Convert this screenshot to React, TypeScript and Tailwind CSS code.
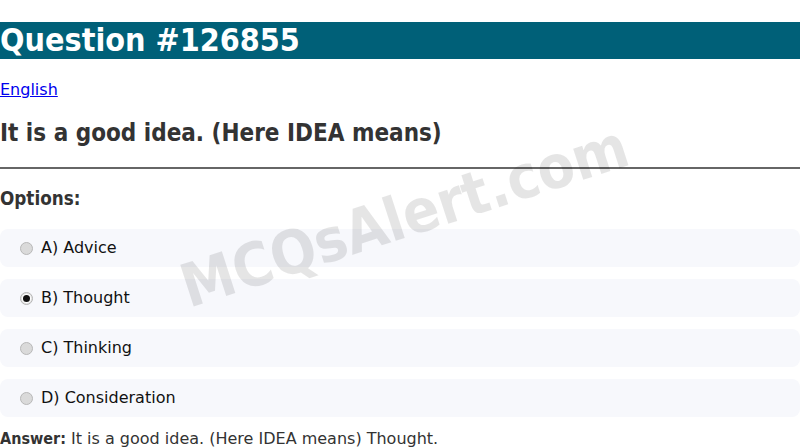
import React from "react";

const options = [
  { id: "a", label: "A) Advice", checked: false },
  { id: "b", label: "B) Thought", checked: true },
  { id: "c", label: "C) Thinking", checked: false },
  { id: "d", label: "D) Consideration", checked: false },
];

function Radio({ checked }: { checked: boolean }) {
  return checked ? (
    <span className="w-[13px] h-[13px] rounded-full border border-[#b5b5b5] bg-[#e6e6e6] flex items-center justify-center shrink-0">
      <span className="w-[9px] h-[9px] rounded-full bg-white flex items-center justify-center">
        <span className="w-[7px] h-[7px] rounded-full bg-[#111]" />
      </span>
    </span>
  ) : (
    <span className="w-[13px] h-[13px] rounded-full border border-[#b8b8b8] bg-[#dadada] shrink-0" />
  );
}

export default function App() {
  return (
    <div className="relative w-[800px] min-h-[448px] bg-white overflow-hidden font-['DejaVu_Sans',sans-serif] text-[#333]">
      <h1 className="mt-[22px] mb-[21px] bg-[#006078] text-white text-[32px] leading-[37px] font-bold font-['DejaVu_Sans_Condensed','DejaVu_Sans',sans-serif]">
        Question #126855
      </h1>
      <p className="text-[16px] leading-[19px]">
        <a href="#" className="text-[#0000ee] underline">English</a>
      </p>
      <h2 className="mt-[20px] mb-[20px] text-[24px] leading-[28px] font-bold text-[#333] font-['DejaVu_Sans_Condensed','DejaVu_Sans',sans-serif]">
        It is a good idea. (Here IDEA means)
      </h2>
      <hr className="border-0 border-t-2 border-[#666] h-0" />
      <h3 className="mt-[19px] mb-[19px] text-[18.72px] leading-[22px] font-bold text-[#333] font-['DejaVu_Sans_Condensed','DejaVu_Sans',sans-serif]">
        Options:
      </h3>
      <div className="flex flex-col gap-[12px]">
        {options.map((o) => (
          <label
            key={o.id}
            className="flex items-center h-[38px] pl-[20px] rounded-lg bg-[#f7f8fc] text-[16px] text-[#111]"
          >
            <Radio checked={o.checked} />
            <span className="ml-[8px]">{o.label}</span>
          </label>
        ))}
      </div>
      <p className="mt-[12px] text-[16px] leading-[19px] text-[#333]">
        <b className="font-['DejaVu_Sans_Condensed','DejaVu_Sans',sans-serif]">Answer:</b> It is a good idea. (Here IDEA means) Thought.
      </p>
      <div className="pointer-events-none absolute inset-0 flex items-center justify-center">
        <span className="block translate-x-[4px] -translate-y-[8px] -rotate-[18deg] text-[60px] font-bold text-black/10 whitespace-nowrap font-['DejaVu_Sans_Condensed','DejaVu_Sans',sans-serif]">
          MCQsAlert.com
        </span>
      </div>
    </div>
  );
}
